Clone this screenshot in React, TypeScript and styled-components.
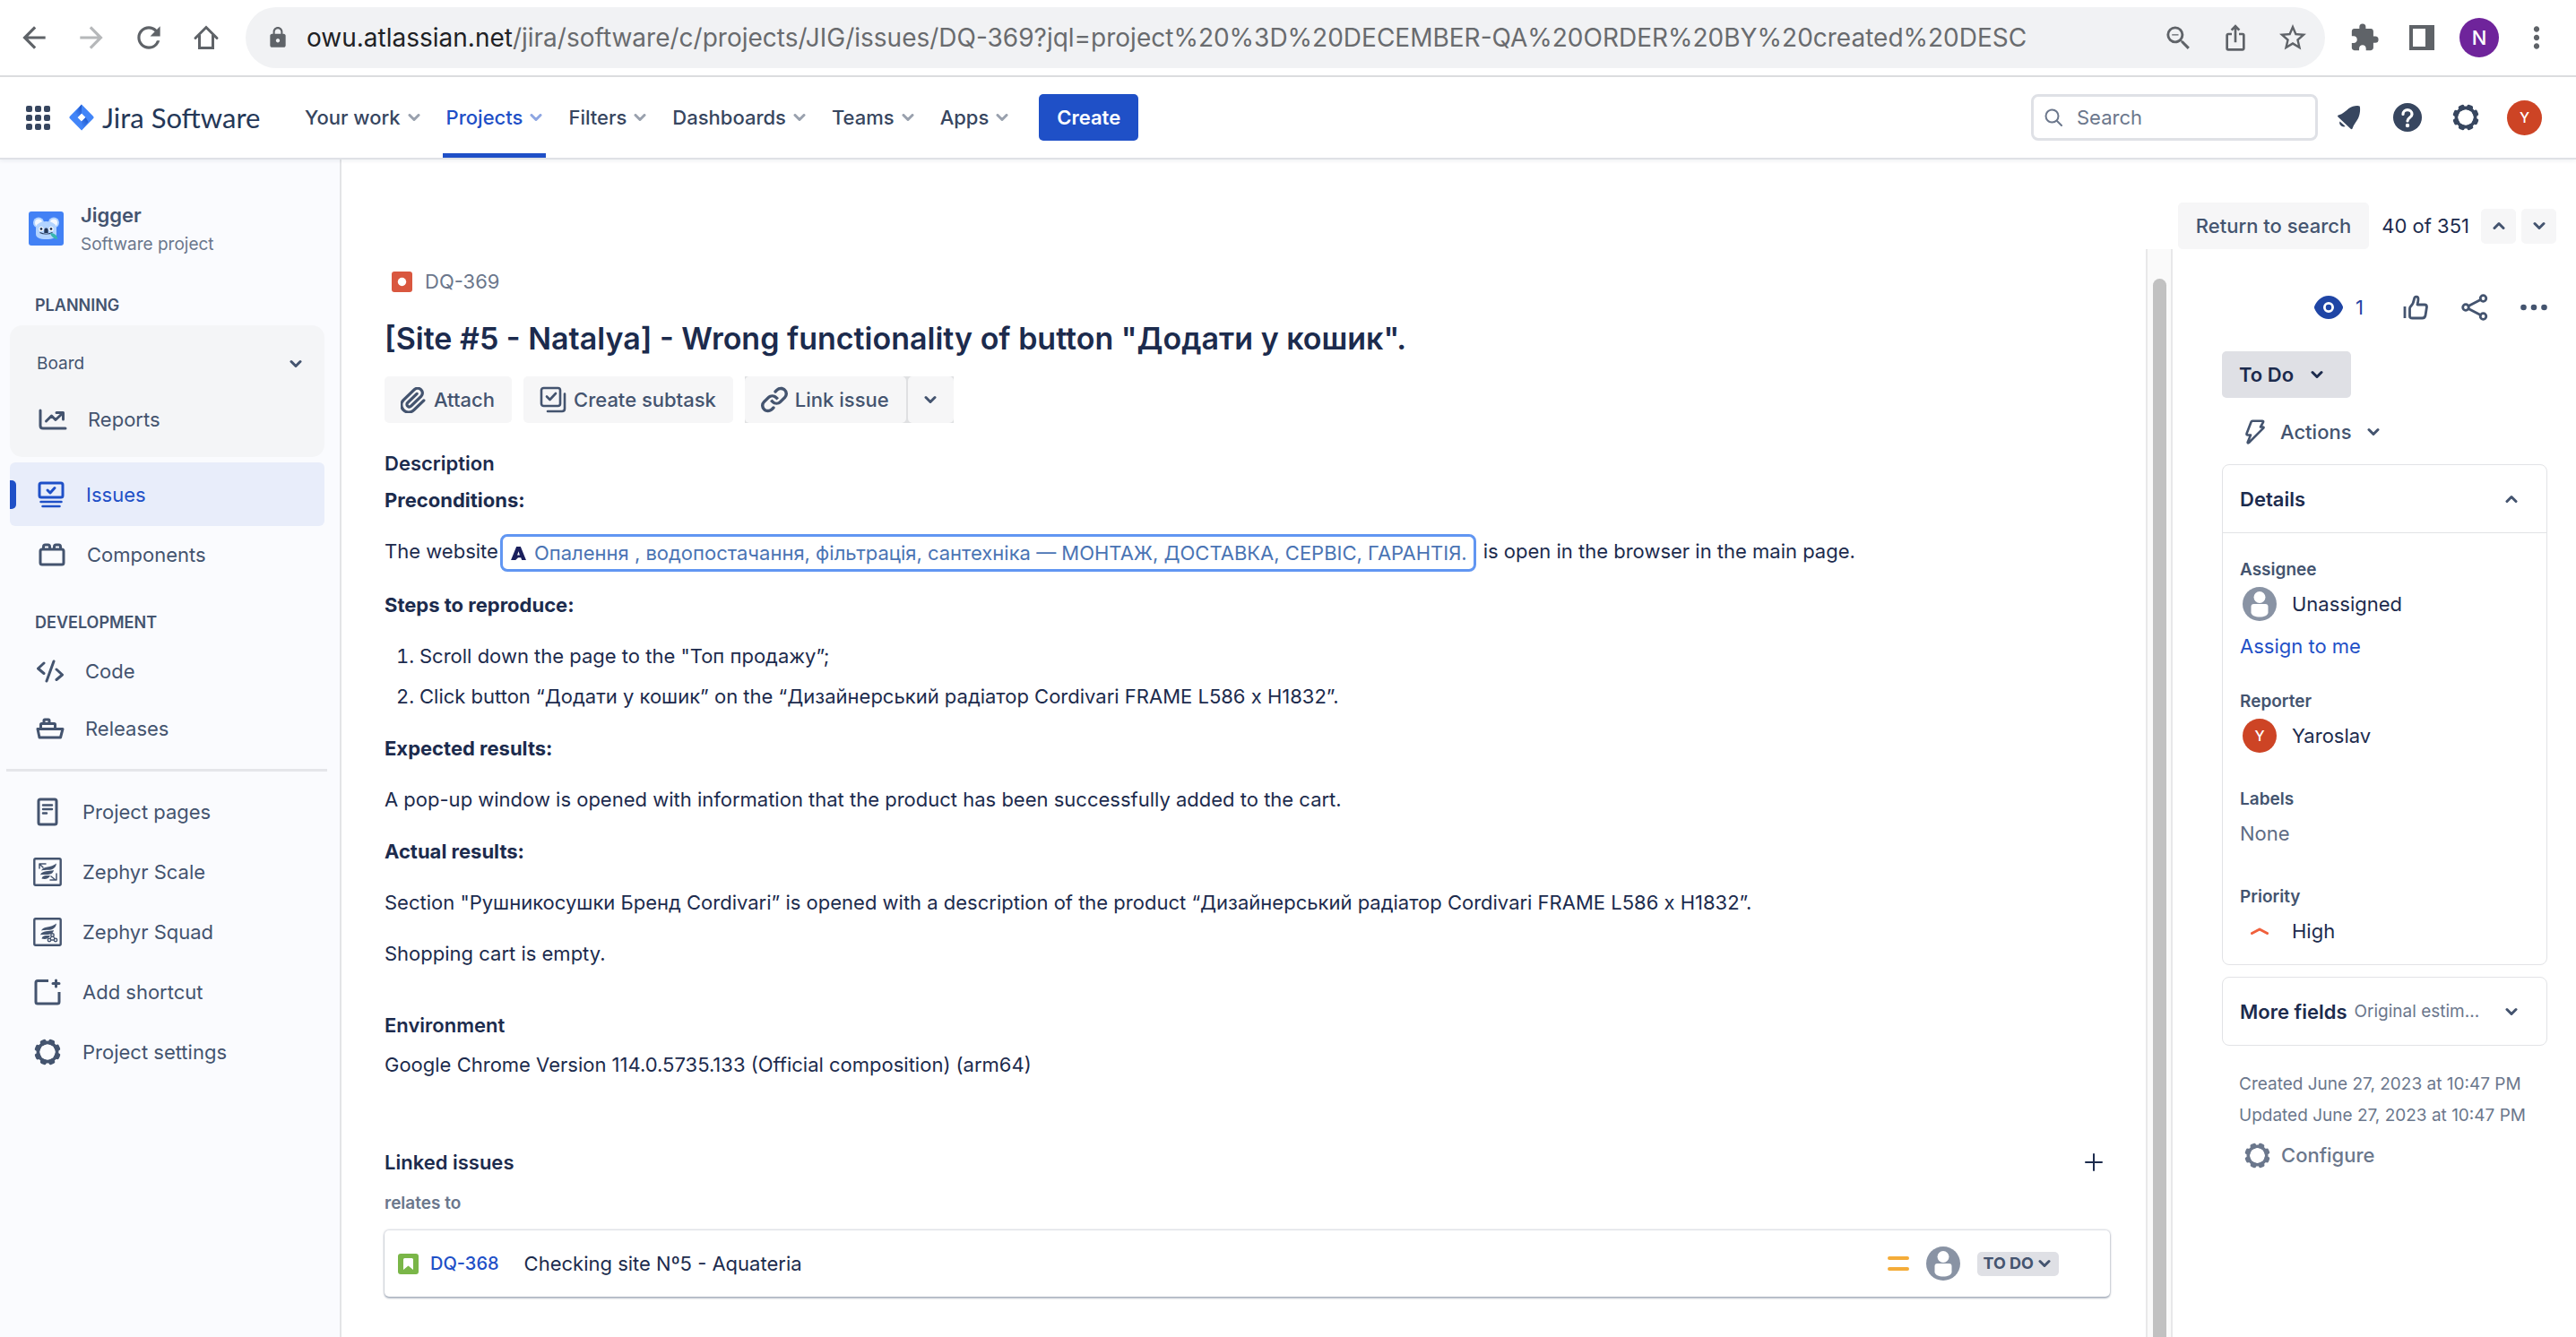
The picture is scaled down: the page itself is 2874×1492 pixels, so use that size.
import React from "react";
import styled, { createGlobalStyle, css } from "styled-components";
import {
  MdArrowBack,
  MdArrowForward,
  MdExtension,
  MdIosShare,
  MdLock,
  MdMoreVert,
  MdRefresh,
  MdStarBorder,
  MdZoomOut,
} from "react-icons/md";

const c = {
  ink: "#1c2b4d",
  text: "#44546f",
  nav: "#37465f",
  subtle: "#6b778c",
  blue: "#1f50c7",
  line: "#e2e3e6",
  soft: "#f6f6f7",
  side: "#fafbfe",
};

const Global = createGlobalStyle`
  * { box-sizing: border-box; }
  body {
    margin: 0;
    background: #fff;
    color: ${c.ink};
    font: 400 22px/32px Inter, "Noto Sans", "Liberation Sans", sans-serif;
  }
  h1, h2, h3, p, ol, ul, dl, dd, dt { margin: 0; padding: 0; font-size: inherit; font-weight: inherit; }
  ul { list-style: none; }
  button { font: inherit; color: inherit; border: 0; padding: 0; background: none; cursor: pointer; }
  a { color: inherit; text-decoration: none; }
  svg { display: block; flex: none; }
`;

const Shell = styled.div`
  display: flex;
  flex-direction: column;
  height: 100vh;
  overflow: hidden;
`;

/* Browser bar */
const BrowserBar = styled.div`
  display: flex;
  align-items: center;
  flex: none;
  height: 86px;
  padding: 0 19px;
  border-bottom: 2px solid #dcdddf;
  color: #5f6368;
`;
const BrowserNav = styled.nav`
  display: flex;
  gap: 26px;
  width: 255px;
`;
const IconButton = styled.button<{ $faded?: boolean }>`
  display: flex;
  align-items: center;
  justify-content: center;
  min-width: 38px;
  height: 38px;
  opacity: ${(p) => (p.$faded ? 0.45 : 1)};
`;
const Address = styled.div`
  display: flex;
  align-items: center;
  flex: 1;
  min-width: 0;
  height: 68px;
  padding: 0 17px 0 23px;
  border-radius: 34px;
  background: #f1f2f4;
`;
const Url = styled.div`
  flex: 1;
  min-width: 0;
  margin-left: 19px;
  overflow: hidden;
  white-space: nowrap;
  font-size: 28px;
  line-height: 40px;
  color: #696b6e;
`;
const Host = styled.span`
  color: #202124;
`;
const AddressTools = styled.div`
  display: flex;
  gap: 26px;
`;
const BrowserTools = styled.div`
  display: flex;
  align-items: center;
  gap: 26px;
  margin: 0 6px 0 25px;
`;
const ProfileButton = styled.button`
  margin: 0 -3px;
`;
const Avatar = styled.span<{ $size: number; $bg: string; $font: number }>`
  display: flex;
  align-items: center;
  justify-content: center;
  flex: none;
  width: ${(p) => p.$size}px;
  height: ${(p) => p.$size}px;
  border-radius: 50%;
  background: ${(p) => p.$bg};
  color: #fff;
  font-size: ${(p) => p.$font}px;
  font-weight: 500;
`;

/* Product header */
const TopBar = styled.header`
  position: relative;
  display: flex;
  align-items: center;
  flex: none;
  height: 92px;
  padding: 0 38px 0 23px;
  border-bottom: 2px solid #dfe1e6;
  box-shadow: 0 2px 4px rgba(9, 30, 66, 0.06);
  color: ${c.nav};
`;
const Brand = styled.a`
  display: flex;
  align-items: center;
  gap: 9px;
  width: 259px;
  margin-left: 16px;
  font: 400 31px/40px Lato, "Open Sans", sans-serif;
  color: #253858;
`;
const Menu = styled.nav`
  display: flex;
  align-self: stretch;
  gap: 21px;
`;
const MenuButton = styled.button<{ $active?: boolean }>`
  display: flex;
  align-items: center;
  gap: 8px;
  padding: 0 4px;
  border-top: 5px solid transparent;
  border-bottom: 5px solid ${(p) => (p.$active ? c.blue : "transparent")};
  color: ${(p) => (p.$active ? c.blue : c.nav)};
  font-weight: 500;
  svg { opacity: 0.5; }
`;
const CreateButton = styled.button`
  height: 52px;
  margin: 0 auto 0 30px;
  padding: 0 20px;
  border-radius: 5px;
  background: ${c.blue};
  color: #fff;
  font-weight: 600;
`;
const SearchBox = styled.label`
  display: flex;
  align-items: center;
  gap: 16px;
  width: 320px;
  height: 52px;
  padding: 0 12px;
  border: 3px solid #dfe1e6;
  border-radius: 8px;
  color: ${c.subtle};
`;
const SearchInput = styled.input`
  flex: 1;
  min-width: 0;
  padding: 0;
  border: 0;
  outline: 0;
  background: none;
  font: inherit;
  color: ${c.ink};
  &::placeholder { color: ${c.subtle}; opacity: 1; }
`;
const TopTools = styled.div`
  display: flex;
  align-items: center;
  gap: 27px;
  margin-left: 16px;
`;

/* Sidebar */
const Body = styled.div`
  display: flex;
  flex: 1;
  min-height: 0;
`;
const Sidebar = styled.aside`
  flex: none;
  width: 381px;
  padding: 44px 17px 0 11px;
  border-right: 2px solid #e3e4e6;
  background: ${c.side};
  color: ${c.text};
`;
const Project = styled.div`
  display: flex;
  align-items: center;
  gap: 19px;
  padding-left: 21px;
`;
const ProjectName = styled.h2`
  line-height: 36px;
  font-weight: 600;
`;
const ProjectKind = styled.p`
  font-size: 19px;
  line-height: 30px;
  color: ${c.subtle};
`;
const GroupTitle = styled.h3`
  padding-left: 28px;
  font-size: 18px;
  line-height: 24px;
  font-weight: 600;
`;
const Planning = styled.section`
  margin-top: 41px;
`;
const Development = styled.section`
  margin-top: 33px;
`;
const BoardPanel = styled.div`
  height: 147px;
  margin: 10px 0 6px;
  padding-top: 26px;
  border-radius: 14px;
  background: #f4f5f7;
`;
const BoardButton = styled.button`
  display: flex;
  align-items: center;
  justify-content: space-between;
  width: 100%;
  height: 34px;
  padding: 0 25px 0 30px;
  font-size: 19px;
`;
const NavItem = styled.a<{ $height: number; $inset: number; $active?: boolean }>`
  display: flex;
  align-items: center;
  gap: 23px;
  height: ${(p) => p.$height}px;
  padding-left: ${(p) => p.$inset}px;
  ${(p) =>
    p.$active &&
    css`
      padding-left: 0;
      border-radius: 6px;
      background: #e8edfa;
      color: ${c.blue};
      &::before {
        content: "";
        width: 7px;
        height: 32px;
        border-radius: 0 5px 5px 0;
        background: ${c.blue};
      }
    `}
`;
const NavIcon = styled.span`
  display: flex;
  justify-content: center;
  flex: none;
  width: 32px;
`;
const Divider = styled.hr`
  height: 3px;
  margin: 23px -3px 11px -4px;
  border: 0;
  background: #e5e6ea;
`;

/* Issue */
const Workspace = styled.main`
  display: flex;
  flex-direction: column;
  flex: 1;
  min-width: 0;
`;
const Pager = styled.div`
  display: flex;
  align-items: center;
  justify-content: flex-end;
  gap: 6px;
  flex: none;
  height: 100px;
  padding: 48px 22px 0 0;
`;
const PagerText = styled.span`
  margin: 0 7px 0 8px;
`;
const Button = styled.button<{ $square?: boolean }>`
  display: flex;
  align-items: center;
  justify-content: center;
  gap: 8px;
  width: ${(p) => (p.$square ? "39px" : "auto")};
  height: ${(p) => (p.$square ? "39px" : "52px")};
  padding: ${(p) => (p.$square ? "0" : "0 19px 0 18px")};
  border-radius: 5px;
  background: ${c.soft};
  color: ${c.text};
  font-weight: 500;
`;
const ReturnButton = styled(Button)`
  padding: 0 20px;
`;
const Columns = styled.div`
  display: flex;
  flex: 1;
  min-height: 0;
`;
const Issue = styled.article`
  flex: 1;
  min-width: 0;
  padding: 20px 40px 0 48px;
  overflow: hidden;
`;
const Crumb = styled.a`
  display: flex;
  align-items: center;
  gap: 14px;
  padding-left: 8px;
  color: ${c.subtle};
`;
const Title = styled.h1`
  margin: 24px 0 18px;
  font-size: 34px;
  line-height: 48px;
  font-weight: 600;
`;
const Actions = styled.div`
  display: flex;
  gap: 13px;
`;
const Split = styled.div`
  display: flex;
  gap: 2px;
  background: #dfe0e2;
`;
const SplitEnd = styled(Button)`
  width: 51px;
  padding: 0;
`;
const Heading = styled.h2<{ $top: number }>`
  margin-top: ${(p) => p.$top}px;
  font-weight: 600;
`;
const Step = styled.h3<{ $first?: boolean }>`
  margin-top: ${(p) => (p.$first ? 9 : 26)}px;
  font-weight: 700;
`;
const Text = styled.p`
  margin-top: 25px;
`;
const EnvText = styled.p`
  margin-top: 12px;
`;
const SmartLink = styled.a`
  display: inline-flex;
  align-items: center;
  gap: 9px;
  height: 42px;
  margin: -5px 8px -5px 2px;
  padding: 0 7px 0 9px;
  border: 3px solid #6196f2;
  border-radius: 8px;
  vertical-align: middle;
  color: #4a74b4;
`;
const Steps = styled.ol`
  display: grid;
  gap: 13px;
  margin-top: 25px;
  padding-left: 39px;
`;
const LinkedHead = styled.div`
  display: flex;
  align-items: center;
  justify-content: space-between;
  margin-top: 77px;
  padding-right: 8px;
  color: ${c.ink};
`;
const Relation = styled.p`
  margin: 14px 0;
  font-size: 19px;
  font-weight: 600;
  color: ${c.subtle};
`;
const LinkedRow = styled.li`
  display: flex;
  align-items: center;
  height: 74px;
  padding: 0 57px 0 15px;
  border-radius: 5px;
  box-shadow: 0 0 2px 1px rgba(9, 30, 66, 0.18), 0 2px 2px rgba(9, 30, 66, 0.25);
`;
const LinkedKey = styled.a`
  margin: 0 28px 0 13px;
  font-size: 20px;
  font-weight: 500;
  color: ${c.blue};
`;
const LinkedMeta = styled.div`
  display: flex;
  align-items: center;
  gap: 19px;
  margin-left: auto;
`;
const Lozenge = styled.button`
  display: flex;
  align-items: center;
  gap: 5px;
  height: 27px;
  padding: 0 9px 0 7px;
  border-radius: 5px;
  background: #dfe0e5;
  color: ${c.text};
  font-size: 18px;
  line-height: 26px;
  font-weight: 700;
`;
const ScrollTrack = styled.div`
  flex: none;
  width: 30px;
  padding: 33px 5px 0 6px;
  border: solid #e8e8e9;
  border-width: 0 2px;
  background: #fafafa;
`;
const ScrollThumb = styled.div`
  height: 100%;
  border-radius: 8px 8px 0 0;
  background: #c1c1c1;
`;

/* Details panel */
const Panel = styled.aside`
  flex: none;
  width: 450px;
  padding: 46px 32px 0 55px;
`;
const Watch = styled.div`
  display: flex;
  align-items: center;
  justify-content: flex-end;
  gap: 28px;
  margin-right: -4px;
  color: ${c.text};
`;
const WatchButton = styled(IconButton)`
  gap: 14px;
  margin-right: 11px;
  color: #1f45a5;
`;
const StatusButton = styled.button`
  display: flex;
  align-items: center;
  gap: 19px;
  height: 52px;
  width: 144px;
  margin-top: 30px;
  padding: 0 19px;
  border-radius: 5px;
  background: #dfe0e5;
  font-weight: 600;
`;
const ActionsButton = styled.button`
  display: flex;
  align-items: center;
  gap: 17px;
  height: 40px;
  margin: 18px 0 16px;
  padding-left: 26px;
  font-weight: 500;
  color: ${c.text};
`;
const Card = styled.section`
  margin-bottom: 13px;
  border: 1px solid ${c.line};
  border-radius: 8px;
`;
const CardHead = styled.button`
  display: flex;
  align-items: center;
  gap: 8px;
  width: 100%;
  height: 75px;
  padding: 0 32px 0 19px;
  text-align: left;
  font-weight: 600;
  svg { margin-left: auto; color: ${c.text}; }
`;
const Hint = styled.span`
  flex: 1;
  font-size: 19px;
  font-weight: 400;
  white-space: nowrap;
  color: ${c.subtle};
`;
const Fields = styled.dl`
  display: grid;
  gap: 34px;
  padding: 25px 19px 16px;
  border-top: 1px solid ${c.line};
`;
const Field = styled.div`
  display: grid;
  gap: 1px;
`;
const FieldName = styled.dt`
  font-size: 19px;
  font-weight: 600;
  color: ${c.text};
`;
const FieldValue = styled.dd<{ $muted?: boolean }>`
  display: flex;
  align-items: center;
  gap: 17px;
  height: 42px;
  color: ${(p) => (p.$muted ? "#5e6c84" : c.ink)};
`;
const Slot = styled.span`
  display: flex;
  justify-content: center;
  width: 38px;
  margin-left: 3px;
`;
const AssignLink = styled.a`
  margin: 9px 0 -4px;
  color: ${c.blue};
`;
const Stamps = styled.footer`
  display: grid;
  gap: 3px;
  padding: 14px 0 0 19px;
  font-size: 19px;
  color: ${c.subtle};
`;
const Configure = styled.button`
  display: flex;
  align-items: center;
  gap: 12px;
  margin-top: 9px;
  padding-left: 6px;
  font-size: 22px;
  font-weight: 500;
`;

const Chevron = ({ up }: { up?: boolean }) => (
  <svg width="14" height="14" viewBox="0 0 14 14" fill="none" stroke="currentColor" strokeWidth="3" strokeLinecap="round" strokeLinejoin="round">
    <path d={up ? "M2 9.5 7 4.5 12 9.5" : "M2 4.5 7 9.5 12 4.5"} />
  </svg>
);

const Gear = ({ size = 30 }: { size?: number }) => (
  <svg width={size} height={size} viewBox="0 0 30 30" fill="currentColor">
    {[22, 67, 112, 157, 202, 247, 292, 337].map((a) => (
      <rect key={a} x="11.500" y="0.4" width="7" height="6" rx="2" transform={`rotate(${a} 15 15)`} />
    ))}
    <circle cx="15" cy="15" r="10.600" fill="none" stroke="currentColor" strokeWidth="3.600" />
  </svg>
);

const Person = ({ size = 38 }: { size?: number }) => (
  <svg width={size} height={size} viewBox="0 0 38 38">
    <circle cx="19" cy="19" r="19" fill="#8993a4" />
    <circle cx="19" cy="11.5" r="6.5" fill="#fff" />
    <path d="M9.5 22a3 3 0 0 1 3-3h13a3 3 0 0 1 3 3v6.5c0 3-4.500 5-9.500 5s-9.500-2-9.500-5z" fill="#fff" />
  </svg>
);

const Line = ({ w = 30, h = 30, children, sw = 3 }: { w?: number; h?: number; sw?: number; children: React.ReactNode }) => (
  <svg width={w} height={h} viewBox={`0 0 ${w} ${h}`} fill="none" stroke="currentColor" strokeWidth={sw} strokeLinecap="round" strokeLinejoin="round">
    {children}
  </svg>
);

const HomeIcon = () => (
  <Line sw={3}>
    <path d="M3 15.500 15 3.500l12 12M7.500 12.500V26.500h15V12.500" strokeLinejoin="miter" />
  </Line>
);
const PanelIcon = () => (
  <svg width="28" height="28" viewBox="0 0 28 28">
    <path fill="currentColor" fillRule="evenodd" d="M0 0h28v28H0zM4 4v20h14V4z" />
  </svg>
);
const AppsIcon = () => (
  <svg width="28" height="28" viewBox="0 0 28 28" fill="currentColor">
    {[1, 11, 21].map((y) => [1, 11, 21].map((x) => <rect key={`${x}-${y}`} x={x} y={y} width="7" height="7" rx="2" />))}
  </svg>
);
const JiraMark = () => (
  <svg width="28" height="30" viewBox="0 0 28 30">
    <defs>
      <linearGradient id="jl" x1="0.9" y1="0.1" x2="0.3" y2="0.9">
        <stop offset="0" stopColor="#1f56c8" />
        <stop offset="1" stopColor="#4285f8" />
      </linearGradient>
    </defs>
    <path fill="#4285f8" d="M14 .5 27 13.700q1.200 1.300 0 2.600L14 29.500 1 16.300q-1.200-1.300 0-2.600zM14 10.500 9.500 15l4.500 4.500 4.500-4.500z" fillRule="evenodd" />
    <path fill="url(#jl)" d="M14 .5v10L9.500 15 6.500 10z" />
    <path fill="url(#jl)" d="M14 29.500v-10l4.500-4.500 3 5z" />
  </svg>
);
const MagnifierIcon = () => (
  <Line w={20} h={20} sw={2}>
    <circle cx="8.500" cy="8.500" r="7" />
    <path d="m14 14 5 5" />
  </Line>
);
const BellIcon = () => (
  <svg width="28" height="28" viewBox="0 0 28 28" fill="currentColor">
    <path d="M25.500 1.500c1 .8 1 8.500-1.500 13.500-2 4-5 6.500-6.500 11.500-.3 1-1.200 1-1.900.3L1.500 13.500c-.8-.8-.4-1.600.5-1.900C7 10 10 7 13.500 4 17.500.6 24 .5 25.500 1.500z" />
    <path d="M3.500 18.500c-1.500 3.500 2.500 7 6.200 5.600z" />
  </svg>
);
const HelpIcon = () => (
  <svg width="32" height="32" viewBox="0 0 32 32">
    <circle cx="16" cy="16" r="16" fill="currentColor" />
    <path d="M11 12.500c0-6.500 10-6.500 10 0 0 4-5 3.500-5 7.500" fill="none" stroke="#fff" strokeWidth="3.200" strokeLinecap="round" />
    <circle cx="16" cy="25" r="2.200" fill="#fff" />
  </svg>
);
const KoalaIcon = () => (
  <svg width="39" height="38" viewBox="0 0 39 38">
    <rect width="39" height="38" rx="3" fill="#4281f5" />
    <circle cx="11" cy="12.500" r="6" fill="#b3d4ff" />
    <circle cx="28" cy="12.500" r="6" fill="#b3d4ff" />
    <circle cx="11" cy="12.500" r="4" fill="#f4f8ff" />
    <circle cx="28" cy="12.500" r="4" fill="#f4f8ff" />
    <path d="M8 19c0-5 5-8 11.500-8S31 14 31 19v6c0 4-4 6-11.500 6S8 29 8 25z" fill="#b3d4ff" />
    <circle cx="14" cy="19.500" r="2.600" fill="#fff" />
    <circle cx="25" cy="19.500" r="2.600" fill="#fff" />
    <circle cx="14" cy="19.500" r="1.400" fill="#253858" />
    <circle cx="25" cy="19.500" r="1.400" fill="#253858" />
    <path d="M17.300 21c0-3.200 4.400-3.200 4.400 0v3h-4.400z" fill="#253858" />
    <path d="M12.500 23.500c4 2 10 2 14 0" fill="none" stroke="#253858" strokeWidth="1.200" />
    <path d="M24 24c5 0 8 3 8 7-4-.5-7-3-8-7z" fill="#36b5b0" />
  </svg>
);
const ReportsIcon = () => (
  <Line w={32} h={24}>
    <path d="M2 2v17q0 3 3 3h25" />
    <path d="m8.500 14 6-6 4.500 4.500L27 5M20 4.500h7.500V12" />
  </Line>
);
const IssuesIcon = () => (
  <Line>
    <rect x="2" y="2" width="26" height="16" rx="2" />
    <path d="m11 10 3 3 5-5.500" />
    <path d="M3.500 23h23M5.500 28h19" strokeWidth="2.500" />
  </Line>
);
const ComponentsIcon = () => (
  <Line w={30} h={26}>
    <rect x="2" y="7" width="26" height="17" rx="2" />
    <path d="M5.500 6.500V4q0-2 2-2h3q2 0 2 2v2.500M17.500 6.500V4q0-2 2-2h3q2 0 2 2v2.500" />
  </Line>
);
const CodeIcon = () => (
  <Line w={30} h={26}>
    <path d="m8 4-6.500 6L8 15.500M22 11l6.500 6-6.500 5.500M19 2l-8 22" />
  </Line>
);
const ShipIcon = () => (
  <Line w={32} h={24}>
    <path d="M2 12.500h28l-2.500 9.500H4zM5.500 12V7.500q0-1 1-1h14q1 0 1 1V12M9 6V3q0-1 1-1h4q1 0 1 1v3" />
  </Line>
);
const PageIcon = () => (
  <Line w={24} h={32}>
    <rect x="2" y="2" width="20" height="28" rx="2" />
    <path d="M7 8.500h10M7 13h10M7 17.500h4" strokeWidth="2.500" />
  </Line>
);
const Wing = () => (
  <g fill="currentColor" stroke="none">
    <path d="M9 14.500c2-5 11-3 17-8-1 6-5 7-9 7.300-3 .2-5 0-8 .7z" />
    <path d="M8 19.200c2-5 10-3.500 15-5.200-1 4.200-4 5-8 5-3 0-4.500-.3-7 .2z" />
    <path d="M9.500 23.500c1-4 5-3.500 9.500-3.500-1.500 4-6 4.500-9.500 3.500z" />
  </g>
);
const ZephyrScaleIcon = () => (
  <Line w={32} h={32} sw={2.4}>
    <rect x="1.300" y="1.300" width="29.400" height="29.400" rx="1.500" />
    <Wing />
    <path d="M7 12V7h7M7 7l4 4M26 18v7h-7M25 25l-5-4" strokeWidth="1.500" />
  </Line>
);
const ZephyrSquadIcon = () => (
  <Line w={32} h={32} sw={2.4}>
    <rect x="1.300" y="1.300" width="29.400" height="29.400" rx="1.500" />
    <Wing />
    <g strokeWidth="1.400">
      <circle cx="21.500" cy="19.500" r="1.700" />
      <circle cx="18" cy="25" r="1.700" />
      <circle cx="25" cy="25" r="1.700" />
      <path d="m20.500 21-1.500 2.500M22.500 21l1.500 2.500M19.700 25h3.500" />
    </g>
  </Line>
);
const AddShortcutIcon = () => (
  <Line w={32} h={32}>
    <path d="M17 3.500H5q-2 0-2 2V27q0 2 2 2h22q2 0 2-2V16" strokeLinecap="butt" />
    <path d="M25.500 3v7M22 6.500h7" />
  </Line>
);
const BugIcon = () => (
  <svg width="23" height="23" viewBox="0 0 23 23">
    <rect width="23" height="23" rx="3" fill="#d9573f" />
    <circle cx="11.500" cy="11.500" r="4.700" fill="#fff" />
  </svg>
);
const StoryIcon = () => (
  <svg width="23" height="23" viewBox="0 0 23 23">
    <rect width="23" height="23" rx="3" fill="#7ab648" />
    <path d="M6 6.500q0-1.500 1.500-1.500h8q1.500 0 1.500 1.500V18l-5.500-4.500L6 18z" fill="#fff" />
  </svg>
);
const ClipIcon = () => (
  <svg width="29" height="29" viewBox="3.500 3.200 17.400 17.400" fill="currentColor">
    <path d="M11.643 17.965c-1.530 1.495-4.016 1.496-5.542.004a3.773 3.773 0 01.002-5.412l7.147-6.985a2.316 2.316 0 013.220-.004c.893.873.895 2.282.004 3.153l-6.703 6.550a.653.653 0 01-.914-.008.620.620 0 010-.902l6.229-6.087a.941.941 0 000-1.353.995.995 0 00-1.384 0l-6.230 6.087a2.502 2.502 0 00-.001 3.607 2.643 2.643 0 003.683.009l6.703-6.550a4.074 4.074 0 00-.004-5.859 4.306 4.306 0 00-5.986.003l-7.148 6.985a5.655 5.655 0 00-.001 8.118c2.290 2.239 6.015 2.238 8.310-.005l6.686-6.533a.941.941 0 000-1.353.995.995 0 00-1.384 0l-6.687 6.533z" />
  </svg>
);
const SubtaskIcon = () => (
  <Line w={30} h={30} sw={2.600}>
    <rect x="2" y="2" width="21" height="20" rx="2.500" />
    <path d="m8 11.500 3.500 3.500L18 8M28 8.500V25q0 3-3 3H9" />
  </Line>
);
const LinkIcon = () => (
  <svg width="30" height="30" viewBox="3 3.500 18 18" fill="currentColor">
    <path d="M12.856 5.457l-.937.920a1.002 1.002 0 000 1.437 1.047 1.047 0 001.463 0l.984-.966c.967-.950 2.542-1.135 3.602-.288a2.540 2.540 0 01.203 3.810l-2.903 2.852a2.646 2.646 0 01-3.696 0l-1.110-1.090L9 13.570l1.108 1.089c1.822 1.788 4.802 1.788 6.622 0l2.905-2.852a4.558 4.558 0 00-.357-6.820c-1.893-1.517-4.695-1.226-6.422.470" />
    <path d="M11.144 19.543l.937-.920a1.002 1.002 0 000-1.437 1.047 1.047 0 00-1.462 0l-.985.966c-.967.950-2.542 1.135-3.602.288a2.540 2.540 0 01-.203-3.810l2.903-2.852a2.646 2.646 0 013.696 0l1.110 1.090L15 11.430l-1.108-1.089c-1.822-1.788-4.802-1.788-6.622 0l-2.905 2.852a4.558 4.558 0 00.357 6.820c1.893 1.517 4.695 1.226 6.422-.470" />
  </svg>
);
const SiteIcon = () => (
  <svg width="17" height="15" viewBox="0 0 18 16">
    <path d="M0 16 6.500 0h5L18 16h-5l-1.200-3H8.500L5.500 16zM9 5.500 7.500 10h3z" fillRule="evenodd" fill="#1a1f5c" />
  </svg>
);
const PlusIcon = () => (
  <Line w={20} h={20} sw={2}>
    <path d="M10 1v18M1 10h18" />
  </Line>
);
const MediumIcon = () => (
  <svg width="24" height="20" viewBox="0 0 24 20" fill="#f4ac39">
    <rect y="2" width="24" height="4" rx="2" />
    <rect y="14" width="24" height="4" rx="2" />
  </svg>
);
const HighIcon = () => (
  <svg width="20" height="10" viewBox="0 0 20 10" fill="none" stroke="#f0603c" strokeWidth="3" strokeLinecap="round" strokeLinejoin="round">
    <path d="m1.500 7.500 8.500-4.500 8.500 4.500" />
  </svg>
);
const EyeIcon = () => (
  <svg width="32" height="26" viewBox="0 0 32 26">
    <path fill="currentColor" d="M16 0c8 0 13.500 6 15.700 11.500q.6 1.500 0 3C29.500 20 24 26 16 26S2.500 20 .3 14.500q-.6-1.500 0-3C2.500 6 8 0 16 0z" />
    <circle cx="16" cy="13" r="4.600" fill="none" stroke="#fff" strokeWidth="2.800" />
  </svg>
);
const ThumbIcon = () => (
  <Line w={28} h={28} sw={2.800}>
    <path d="M7.500 24V15.500q0-1.500 1-2.500c3-3 3.500-5 4-8.500.5-3.500 4.500-3 4.500 0 0 2.500-.5 4-1 6.500h8q2.500 0 2.500 2.500l-1.500 9.500q-.5 3-3.500 3h-11q-3 0-3-2z" />
    <path d="M2 13v13" strokeLinecap="butt" />
  </Line>
);
const ShareIcon = () => (
  <Line w={30} h={30} sw={2.800}>
    <circle cx="5" cy="15" r="3.300" />
    <circle cx="24.500" cy="5" r="3.300" />
    <circle cx="24.500" cy="25" r="3.300" />
    <path d="m8 13.500 13.500-7M8 16.500l13.500 7" />
  </Line>
);
const MoreIcon = () => (
  <svg width="30" height="8" viewBox="0 0 30 8" fill="currentColor">
    <circle cx="3.500" cy="4" r="3.300" />
    <circle cx="15" cy="4" r="3.300" />
    <circle cx="26.500" cy="4" r="3.300" />
  </svg>
);
const BoltIcon = () => (
  <Line w={22} h={28} sw={2.600}>
    <path d="M8 1.800h11q1.500 0 1 1.300L17 8.500h2.500q1.500 0 .8 1.200L4 26q-1.500 1-1.300-.6L6 17.500H3q-2 0-1.300-2L6.500 3q.5-1.200 1.500-1.200z" />
  </Line>
);

type Item = { label: string; icon: React.ReactNode };
const menus = ["Your work", "Projects", "Filters", "Dashboards", "Teams", "Apps"];
const shortcuts: Item[] = [
  { label: "Project pages", icon: <PageIcon /> },
  { label: "Zephyr Scale", icon: <ZephyrScaleIcon /> },
  { label: "Zephyr Squad", icon: <ZephyrSquadIcon /> },
  { label: "Add shortcut", icon: <AddShortcutIcon /> },
  { label: "Project settings", icon: <Gear /> },
];

export default function App() {
  return (
    <Shell>
      <Global />
      <BrowserBar>
        <BrowserNav aria-label="Browser">
          <IconButton aria-label="Back"><MdArrowBack size={38} /></IconButton>
          <IconButton aria-label="Forward" $faded><MdArrowForward size={38} /></IconButton>
          <IconButton aria-label="Reload"><MdRefresh size={38} /></IconButton>
          <IconButton aria-label="Home"><HomeIcon /></IconButton>
        </BrowserNav>
        <Address>
          <MdLock size={26} />
          <Url role="textbox" aria-label="Address">
            <Host>owu.atlassian.net</Host>/jira/software/c/projects/JIG/issues/DQ-369?jql=project%20%3D%20DECEMBER-QA%20ORDER%20BY%20created%20DESC
          </Url>
          <AddressTools>
            <IconButton aria-label="Zoom out"><MdZoomOut size={35} /></IconButton>
            <IconButton aria-label="Share page"><MdIosShare size={32} /></IconButton>
            <IconButton aria-label="Bookmark"><MdStarBorder size={36} /></IconButton>
          </AddressTools>
        </Address>
        <BrowserTools>
          <IconButton aria-label="Extensions"><MdExtension size={34} /></IconButton>
          <IconButton aria-label="Side panel"><PanelIcon /></IconButton>
          <ProfileButton aria-label="Profile"><Avatar $size={44} $bg="#6f249b" $font={22}>N</Avatar></ProfileButton>
          <IconButton aria-label="Browser menu"><MdMoreVert size={38} /></IconButton>
        </BrowserTools>
      </BrowserBar>

      <TopBar>
        <IconButton aria-label="Switch app"><AppsIcon /></IconButton>
        <Brand href="#"><JiraMark />Jira Software</Brand>
        <Menu>
          {menus.map((m) => (
            <MenuButton key={m} $active={m === "Projects"}>{m}<Chevron /></MenuButton>
          ))}
        </Menu>
        <CreateButton>Create</CreateButton>
        <SearchBox>
          <MagnifierIcon />
          <SearchInput type="search" placeholder="Search" aria-label="Search" />
        </SearchBox>
        <TopTools>
          <IconButton aria-label="Notifications"><BellIcon /></IconButton>
          <IconButton aria-label="Help"><HelpIcon /></IconButton>
          <IconButton aria-label="Settings"><Gear /></IconButton>
          <Avatar $size={39} $bg="#cd4425" $font={16}>Y</Avatar>
        </TopTools>
      </TopBar>

      <Body>
        <Sidebar>
          <Project>
            <KoalaIcon />
            <div>
              <ProjectName>Jigger</ProjectName>
              <ProjectKind>Software project</ProjectKind>
            </div>
          </Project>
          <Planning>
            <GroupTitle>PLANNING</GroupTitle>
            <BoardPanel>
              <BoardButton>Board<Chevron /></BoardButton>
              <NavItem href="#" $height={90} $inset={32}><NavIcon><ReportsIcon /></NavIcon>Reports</NavItem>
            </BoardPanel>
            <NavItem href="#" $height={71} $inset={0} $active><NavIcon><IssuesIcon /></NavIcon>Issues</NavItem>
            <NavItem href="#" $height={63} $inset={31}><NavIcon><ComponentsIcon /></NavIcon>Components</NavItem>
          </Planning>
          <Development>
            <GroupTitle>DEVELOPMENT</GroupTitle>
            <NavItem href="#" $height={84} $inset={29}><NavIcon><CodeIcon /></NavIcon>Code</NavItem>
            <NavItem href="#" $height={44} $inset={29}><NavIcon><ShipIcon /></NavIcon>Releases</NavItem>
          </Development>
          <Divider />
          <nav aria-label="Shortcuts">
            {shortcuts.map((s) => (
              <NavItem href="#" key={s.label} $height={67} $inset={26}><NavIcon>{s.icon}</NavIcon>{s.label}</NavItem>
            ))}
          </nav>
        </Sidebar>

        <Workspace>
          <Pager>
            <ReturnButton>Return to search</ReturnButton>
            <PagerText>40 of 351</PagerText>
            <Button $square aria-label="Previous issue"><Chevron up /></Button>
            <Button $square aria-label="Next issue"><Chevron /></Button>
          </Pager>
          <Columns>
            <Issue>
              <Crumb href="#"><BugIcon />DQ-369</Crumb>
              <Title>[Site #5 - Natalya] - Wrong functionality of button "Додати у кошик".</Title>
              <Actions>
                <Button><ClipIcon />Attach</Button>
                <Button><SubtaskIcon />Create subtask</Button>
                <Split>
                  <Button><LinkIcon />Link issue</Button>
                  <SplitEnd aria-label="More link options"><Chevron /></SplitEnd>
                </Split>
              </Actions>
              <Heading $top={29}>Description</Heading>
              <Step $first>Preconditions:</Step>
              <Text>
                The website
                <SmartLink href="#"><SiteIcon />Опалення , водопостачання, фільтрація, сантехніка — МОНТАЖ, ДОСТАВКА, СЕРВІС, ГАРАНТІЯ.</SmartLink>
                is open in the browser in the main page.
              </Text>
              <Step>Steps to reproduce:</Step>
              <Steps>
                <li>Scroll down the page to the "Топ продажу”;</li>
                <li>Click button “Додати у кошик” on the “Дизайнерський радіатор Cordivari FRAME L586 x H1832”.</li>
              </Steps>
              <Step>Expected results:</Step>
              <Text>A pop-up window is opened with information that the product has been successfully added to the cart.</Text>
              <Step>Actual results:</Step>
              <Text>Section "Рушникосушки Бренд Cordivari” is opened with a description of the product “Дизайнерський радіатор Cordivari FRAME L586 x H1832”.</Text>
              <Text>Shopping cart is empty.</Text>
              <Heading $top={48}>Environment</Heading>
              <EnvText>Google Chrome Version 114.0.5735.133 (Official composition) (arm64)</EnvText>
              <LinkedHead>
                <Heading $top={0}>Linked issues</Heading>
                <button aria-label="Link an issue"><PlusIcon /></button>
              </LinkedHead>
              <Relation>relates to</Relation>
              <ul>
                <LinkedRow>
                  <StoryIcon />
                  <LinkedKey href="#">DQ-368</LinkedKey>
                  <span>Checking site Nº5 - Aquateria</span>
                  <LinkedMeta>
                    <MediumIcon />
                    <Person />
                    <Lozenge>TO DO<Chevron /></Lozenge>
                  </LinkedMeta>
                </LinkedRow>
              </ul>
            </Issue>
            <ScrollTrack><ScrollThumb /></ScrollTrack>
            <Panel>
              <Watch>
                <WatchButton aria-label="Watchers"><EyeIcon />1</WatchButton>
                <IconButton aria-label="Vote"><ThumbIcon /></IconButton>
                <IconButton aria-label="Share"><ShareIcon /></IconButton>
                <IconButton aria-label="More actions"><MoreIcon /></IconButton>
              </Watch>
              <StatusButton>To Do<Chevron /></StatusButton>
              <ActionsButton><BoltIcon />Actions<Chevron /></ActionsButton>
              <Card>
                <CardHead>Details<Chevron up /></CardHead>
                <Fields>
                  <Field>
                    <FieldName>Assignee</FieldName>
                    <FieldValue><Slot><Person /></Slot>Unassigned</FieldValue>
                    <AssignLink href="#">Assign to me</AssignLink>
                  </Field>
                  <Field>
                    <FieldName>Reporter</FieldName>
                    <FieldValue><Slot><Avatar $size={38} $bg="#cd4425" $font={16}>Y</Avatar></Slot>Yaroslav</FieldValue>
                  </Field>
                  <Field>
                    <FieldName>Labels</FieldName>
                    <FieldValue $muted>None</FieldValue>
                  </Field>
                  <Field>
                    <FieldName>Priority</FieldName>
                    <FieldValue><Slot><HighIcon /></Slot>High</FieldValue>
                  </Field>
                </Fields>
              </Card>
              <Card>
                <CardHead>More fields<Hint>Original estim...</Hint><Chevron /></CardHead>
              </Card>
              <Stamps>
                <span>Created June 27, 2023 at 10:47 PM</span>
                <span>Updated June 27, 2023 at 10:47 PM</span>
                <Configure><Gear size={29} />Configure</Configure>
              </Stamps>
            </Panel>
          </Columns>
        </Workspace>
      </Body>
    </Shell>
  );
}
